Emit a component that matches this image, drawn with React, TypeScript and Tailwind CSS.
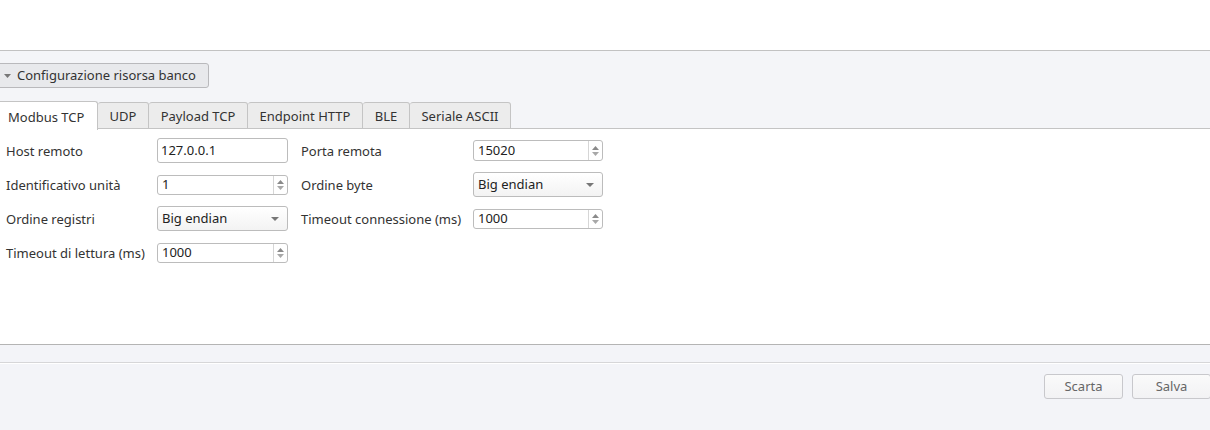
import React from 'react';

const tabs = [
  { name: 'Modbus TCP', w: 'w-[98px]' },
  { name: 'UDP', w: 'w-[51px]' },
  { name: 'Payload TCP', w: 'w-[99px]' },
  { name: 'Endpoint HTTP', w: 'w-[115px]' },
  { name: 'BLE', w: 'w-[47px]' },
  { name: 'Seriale ASCII', w: 'w-[101px]' },
];

const Spin = ({ value, className = '' }: { value: string; className?: string }) => (
  <div className={`flex h-[20px] items-stretch rounded-[3px] border border-[#bcbcbc] bg-white ${className}`}>
    <div className="flex flex-1 items-center pl-[4px] text-[#222]">{value}</div>
    <div className="flex w-[14px] flex-col items-center justify-center gap-[2px] border-l border-[#d6d6d6]">
      <svg width="7" height="4" viewBox="0 0 7 4">
        <path d="M0 4 L3.5 0 L7 4 Z" fill="#8a8a8a" />
      </svg>
      <svg width="7" height="4" viewBox="0 0 7 4">
        <path d="M0 0 L3.5 4 L7 0 Z" fill="#a8a8a8" />
      </svg>
    </div>
  </div>
);

const Combo = ({ value }: { value: string }) => (
  <div className="flex h-[25px] items-center justify-between rounded-[3px] border border-[#bcbcbc] bg-gradient-to-b from-white to-[#f3f3f3] pl-[4px] pr-[8px] text-[#222]">
    <span>{value}</span>
    <svg width="8" height="4" viewBox="0 0 8 4">
      <path d="M0 0 L4 4 L8 0 Z" fill="#777" />
    </svg>
  </div>
);

const Line = ({ value }: { value: string }) => (
  <div className="flex h-[25px] items-center rounded-[3px] border border-[#bcbcbc] bg-white pl-[3px] text-[#222]">
    {value}
  </div>
);

const Label = ({ children }: { children: React.ReactNode }) => (
  <div className="flex h-[25px] items-center whitespace-nowrap pt-[1px] text-[#333]">{children}</div>
);

const Cell = ({ children }: { children: React.ReactNode }) => (
  <div className="flex h-[25px] flex-col justify-center">{children}</div>
);

export default function App() {
  return (
    <div className="h-[430px] w-[1211px] overflow-hidden bg-white font-['Noto_Sans',sans-serif] text-[13px] leading-none">
      <div className="h-[50px] bg-white" />
      <div className="border-t border-[#c2c2c2] bg-[#f4f5f8]">
        <div className="pt-[12px] pb-[12px]">
          <div className="-ml-[4px] flex h-[25px] w-[213px] items-center rounded-[3px] border border-[#b9b9bc] bg-[#e8e9ec] pl-[7px] text-[#333]">
            <svg width="7" height="4" viewBox="0 0 7 4" className="mr-[6px]">
              <path d="M0 0 L3.5 4 L7 0 Z" fill="#777" />
            </svg>
            Configurazione risorsa banco
          </div>
        </div>
        <div className="flex h-[29px] items-end">
          {tabs.map((t, i) =>
            i === 0 ? (
              <div
                key={t.name}
                className={`-mb-px flex h-[29px] items-center rounded-tr-[3px] border-t border-r border-[#c4c4c4] bg-white pl-[8px] pt-[2px] text-[#333] ${t.w}`}
              >
                {t.name}
              </div>
            ) : (
              <div
                key={t.name}
                className={`flex h-[27px] items-center justify-center rounded-t-[3px] border-t border-r border-b border-[#c4c4c4] bg-[#ececec] pt-[1px] text-[#333] ${t.w}`}
              >
                {t.name}
              </div>
            )
          )}
          <div className="h-[27px] flex-1 border-b border-[#c4c4c4]" />
        </div>
      </div>
      <div className="h-[215px] bg-white pt-[9px] pl-[6px]">
        <div className="grid grid-cols-[151px_131px_185px_130px] gap-y-[9px]">
          <Label>Host remoto</Label>
          <Cell><Line value="127.0.0.1" /></Cell>
          <Label><span className="ml-[13px]">Porta remota</span></Label>
          <Cell><Spin value="15020" className="h-[21px]" /></Cell>

          <Label>Identificativo unità</Label>
          <Cell><Spin value="1" /></Cell>
          <Label><span className="ml-[13px]">Ordine byte</span></Label>
          <Cell><Combo value="Big endian" /></Cell>

          <Label>Ordine registri</Label>
          <Cell><Combo value="Big endian" /></Cell>
          <Label><span className="ml-[13px]">Timeout connessione (ms)</span></Label>
          <Cell><Spin value="1000" /></Cell>

          <Label>Timeout di lettura (ms)</Label>
          <Cell><Spin value="1000" /></Cell>
        </div>
      </div>
      <div className="h-[86px] border-t border-[#b4b4b4] bg-[#f3f4f8]">
        <div className="h-[17px]" />
        <div className="border-t border-[#d6d6d8]" />
        <div className="border-t border-white" />
        <div className="flex justify-end gap-[9px] pt-[10px]">
          <button className="flex h-[25px] w-[79px] items-center justify-center rounded-[3px] border border-[#c8c8cc] bg-gradient-to-b from-[#fafafa] to-[#f2f2f4] text-[#666]">
            Scarta
          </button>
          <button className="flex h-[25px] w-[79px] items-center justify-center rounded-[3px] border border-[#c8c8cc] bg-gradient-to-b from-[#fafafa] to-[#f2f2f4] text-[#666]">
            Salva
          </button>
        </div>
      </div>
    </div>
  );
}
